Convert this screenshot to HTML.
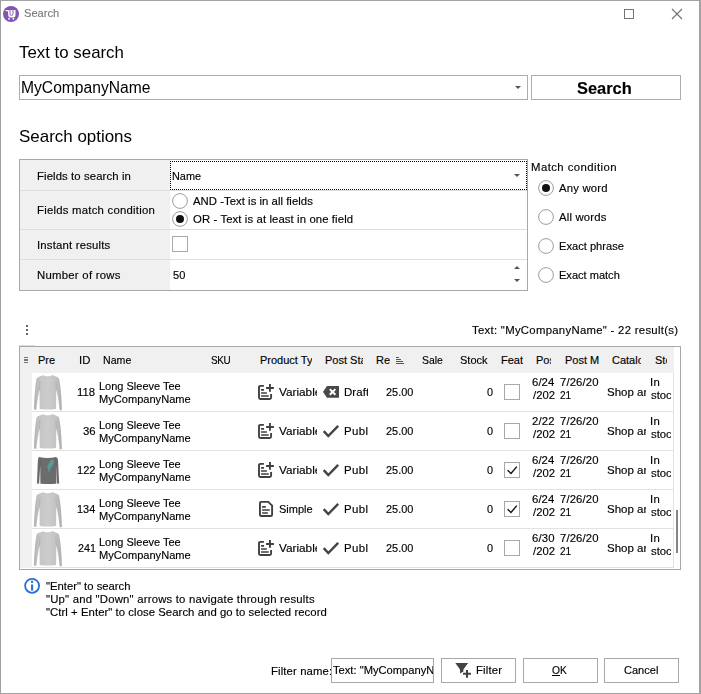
<!DOCTYPE html>
<html><head><meta charset="utf-8"><title>Search</title>
<style>
html,body{margin:0;padding:0;background:#fff;}
body{width:701px;height:694px;position:relative;overflow:hidden;font-family:"Liberation Sans", sans-serif;}
.t{position:absolute;white-space:nowrap;font-family:"Liberation Sans", sans-serif;-webkit-text-stroke:0.15px currentColor;}
.t span{display:inline-block;transform-origin:0 0;}
.b{position:absolute;box-sizing:border-box;}
svg{position:absolute;overflow:visible;}
</style></head><body>
<div class="b" style="left:0px;top:0px;width:701px;height:1px;background:#a3a3a3;"></div>
<div class="b" style="left:0px;top:0px;width:1px;height:694px;background:#a0a0a0;"></div>
<div class="b" style="left:699px;top:0px;width:2px;height:694px;background:#a3a3a3;"></div>
<div class="b" style="left:0px;top:693px;width:701px;height:1px;background:#a3a3a3;"></div>
<svg style="left:3px;top:6px" width="16" height="16" viewBox="0 0 16 16">
<circle cx="8" cy="8" r="8" fill="#7f54b3"/>
<path d="M2.600 3.900H5.200L5.700 5V4H12.500V9Q12.500 11.500 10 11.500H7.700Q5.400 11.500 5.200 9L4.900 5.200H2.600z" fill="#fff"/>
<path d="M7 4V8Q7 9.400 8.400 9.400Q10 9.400 10 8V4" fill="none" stroke="#7f54b3" stroke-width="0.900"/>
<circle cx="6" cy="12.800" r="0.950" fill="#fff"/><circle cx="10.400" cy="12.800" r="0.950" fill="#fff"/>
</svg>
<div class="t" style="left:24px;top:6px;font-size:11px;line-height:14px;font-weight:400;color:#7a7a7a;"><span style="transform:scaleX(1.0074);letter-spacing:0.000px">Search</span></div>
<svg style="left:624px;top:9px" width="10" height="10"><rect x="0.5" y="0.500" width="9" height="9" fill="none" stroke="#757575" stroke-width="1"/></svg>
<svg style="left:672px;top:9px" width="10" height="10"><path d="M0 0L10 10M10 0L0 10" stroke="#707070" stroke-width="1.1" fill="none"/></svg>
<div class="t" style="left:19px;top:42px;font-size:17px;line-height:21px;font-weight:400;color:#000;-webkit-text-stroke:0;"><span style="transform:scaleX(0.9914);letter-spacing:0.000px">Text to search</span></div>
<div class="b" style="left:19px;top:75px;width:509px;height:25px;border:1px solid #adadad;background:#fff;"></div>
<div class="t" style="left:21px;top:78px;font-size:16px;line-height:20px;font-weight:400;color:#000;-webkit-text-stroke:0;"><span style="transform:scaleX(0.9770);letter-spacing:0.000px">MyCompanyName</span></div>
<svg style="left:515px;top:86px" width="6" height="3"><path d="M0 0h6L3 3z" fill="#555"/></svg>
<div class="b" style="left:531px;top:75px;width:150px;height:25px;border:1px solid #adadad;background:#fff;"></div>
<div class="t" style="left:577px;top:79px;font-size:16px;line-height:20px;font-weight:700;color:#000;"><span style="transform:scaleX(1.0250);letter-spacing:0.000px">Search</span></div>
<div class="t" style="left:19px;top:126px;font-size:17px;line-height:21px;font-weight:400;color:#000;-webkit-text-stroke:0;"><span style="transform:scaleX(0.9964);letter-spacing:0.000px">Search options</span></div>
<div class="b" style="left:19px;top:159px;width:509px;height:132px;border:1px solid #a8a8a8;background:#fff;"></div>
<div class="b" style="left:20px;top:160px;width:150px;height:130px;background:#f0f0f0;"></div>
<div class="b" style="left:20px;top:190px;width:507px;height:1px;background:#dedede;"></div>
<div class="b" style="left:20px;top:229px;width:507px;height:1px;background:#dedede;"></div>
<div class="b" style="left:20px;top:259px;width:507px;height:1px;background:#dedede;"></div>
<div class="t" style="left:37px;top:169px;font-size:11px;line-height:14px;font-weight:400;color:#000;"><span style="transform:scaleX(1.0300);letter-spacing:0.101px">Fields to search in</span></div>
<div class="t" style="left:37px;top:203px;font-size:11px;line-height:14px;font-weight:400;color:#000;"><span style="transform:scaleX(1.0300);letter-spacing:0.232px">Fields match condition</span></div>
<div class="t" style="left:37px;top:238px;font-size:11px;line-height:14px;font-weight:400;color:#000;"><span style="transform:scaleX(1.0300);letter-spacing:0.189px">Instant results</span></div>
<div class="t" style="left:37px;top:268px;font-size:11px;line-height:14px;font-weight:400;color:#000;"><span style="transform:scaleX(1.0300);letter-spacing:0.259px">Number of rows</span></div>
<div class="b" style="left:170px;top:161px;width:357px;height:29px;border:1px dotted #000;"></div>
<div class="t" style="left:172px;top:169px;font-size:11px;line-height:14px;font-weight:400;color:#000;"><span style="transform:scaleX(0.9893);letter-spacing:0.000px">Name</span></div>
<svg style="left:514px;top:174px" width="6" height="3"><path d="M0 0h6L3 3z" fill="#555"/></svg>
<svg style="left:172px;top:193px" width="16" height="16"><circle cx="8" cy="8" r="7.400" fill="#fff" stroke="#9c9c9c" stroke-width="1"/></svg>
<svg style="left:172px;top:211.3px" width="16" height="16"><circle cx="8" cy="8" r="7.400" fill="#fff" stroke="#9c9c9c" stroke-width="1"/><circle cx="8" cy="8" r="4" fill="#111"/></svg>
<div class="b" style="left:170px;top:229px;width:30px;height:1px;background:#dedede;"></div>
<div class="t" style="left:193px;top:194px;font-size:11px;line-height:14px;font-weight:400;color:#000;"><span style="transform:scaleX(1.0300);letter-spacing:0.031px">AND -Text is in all fields</span></div>
<div class="t" style="left:193px;top:212px;font-size:11px;line-height:14px;font-weight:400;color:#000;"><span style="transform:scaleX(1.0300);letter-spacing:0.102px">OR - Text is at least in one field</span></div>
<div class="b" style="left:172px;top:236px;width:16px;height:16px;border:1px solid #a8a8a8;background:#fff;"></div>
<div class="t" style="left:173px;top:268px;font-size:11px;line-height:14px;font-weight:400;color:#000;"><span style="transform:scaleX(1.0044);letter-spacing:0.000px">50</span></div>
<svg style="left:514px;top:266px" width="6" height="3"><path d="M0 3h6L3 0z" fill="#555"/></svg>
<svg style="left:514px;top:279px" width="6" height="3"><path d="M0 0h6L3 3z" fill="#555"/></svg>
<div class="t" style="left:531px;top:160px;font-size:11px;line-height:14px;font-weight:400;color:#000;"><span style="transform:scaleX(1.0300);letter-spacing:0.432px">Match condition</span></div>
<svg style="left:538px;top:180px" width="16" height="16"><circle cx="8" cy="8" r="7.400" fill="#fff" stroke="#9c9c9c" stroke-width="1"/><circle cx="8" cy="8" r="4" fill="#111"/></svg>
<svg style="left:538px;top:209px" width="16" height="16"><circle cx="8" cy="8" r="7.400" fill="#fff" stroke="#9c9c9c" stroke-width="1"/></svg>
<svg style="left:538px;top:238px" width="16" height="16"><circle cx="8" cy="8" r="7.400" fill="#fff" stroke="#9c9c9c" stroke-width="1"/></svg>
<svg style="left:538px;top:267px" width="16" height="16"><circle cx="8" cy="8" r="7.400" fill="#fff" stroke="#9c9c9c" stroke-width="1"/></svg>
<div class="t" style="left:559px;top:181px;font-size:11px;line-height:14px;font-weight:400;color:#000;"><span style="transform:scaleX(1.0300);letter-spacing:0.193px">Any word</span></div>
<div class="t" style="left:559px;top:210px;font-size:11px;line-height:14px;font-weight:400;color:#000;"><span style="transform:scaleX(1.0300);letter-spacing:0.173px">All words</span></div>
<div class="t" style="left:559px;top:239px;font-size:11px;line-height:14px;font-weight:400;color:#000;"><span style="transform:scaleX(1.0120);letter-spacing:0.000px">Exact phrase</span></div>
<div class="t" style="left:559px;top:268px;font-size:11px;line-height:14px;font-weight:400;color:#000;"><span style="transform:scaleX(1.0043);letter-spacing:0.000px">Exact match</span></div>
<div class="b" style="left:26px;top:325px;width:2px;height:2px;background:#666;"></div>
<div class="b" style="left:26px;top:329px;width:2px;height:2px;background:#666;"></div>
<div class="b" style="left:26px;top:333px;width:2px;height:2px;background:#666;"></div>
<div class="t" style="left:472px;top:323px;font-size:11px;line-height:14px;font-weight:400;color:#000;"><span style="transform:scaleX(1.0300);letter-spacing:0.287px">Text: &quot;MyCompanyName&quot; - 22 result(s)</span></div>
<div class="b" style="left:19px;top:346px;width:662px;height:224px;border:1px solid #a8a8a8;background:#fff;"></div>
<div class="b" style="left:20px;top:347px;width:654px;height:26px;background:#f0f0f0;"></div>
<div class="b" style="left:20px;top:373px;width:12px;height:195px;background:#f0f0f0;"></div>
<div class="b" style="left:673px;top:373px;width:1px;height:195px;background:#e4e4e4;"></div>
<div class="b" style="left:19px;top:345px;width:16px;height:1px;background:#dcdcdc;"></div>
<div class="b" style="left:24px;top:357.0px;width:4px;height:0.8px;background:#777;"></div>
<div class="b" style="left:24px;top:358.5px;width:4px;height:0.8px;background:#777;"></div>
<div class="b" style="left:24px;top:360.0px;width:4px;height:0.8px;background:#777;"></div>
<div class="b" style="left:24px;top:361.5px;width:4px;height:0.8px;background:#777;"></div>
<div class="t" style="left:38px;top:353px;font-size:11px;line-height:14px;font-weight:400;color:#000;width:16.60px;overflow:hidden;"><span style="transform:scaleX(1.0000);letter-spacing:0.000px">Preview</span></div>
<div class="t" style="left:79px;top:353px;font-size:11px;line-height:14px;font-weight:400;color:#000;"><span style="transform:scaleX(1.0300);letter-spacing:0.015px">ID</span></div>
<div class="t" style="left:103px;top:353px;font-size:11px;line-height:14px;font-weight:400;color:#000;"><span style="transform:scaleX(0.9643);letter-spacing:0.000px">Name</span></div>
<div class="t" style="left:211px;top:353px;font-size:11px;line-height:14px;font-weight:400;color:#000;"><span style="transform:scaleX(0.9000);letter-spacing:-0.458px">SKU</span></div>
<div class="t" style="left:260px;top:353px;font-size:11px;line-height:14px;font-weight:400;color:#000;width:52.30px;overflow:hidden;"><span style="transform:scaleX(1.0000);letter-spacing:0.000px">Product Type</span></div>
<div class="t" style="left:325px;top:353px;font-size:11px;line-height:14px;font-weight:400;color:#000;width:38.40px;overflow:hidden;"><span style="transform:scaleX(1.0000);letter-spacing:0.000px">Post Status</span></div>
<div class="t" style="left:376px;top:353px;font-size:11px;line-height:14px;font-weight:400;color:#000;width:13.50px;overflow:hidden;"><span style="transform:scaleX(1.0000);letter-spacing:0.000px">Regular</span></div>
<div class="b" style="left:396px;top:357px;width:3px;height:1px;background:#555;"></div>
<div class="b" style="left:396px;top:359px;width:5px;height:1px;background:#555;"></div>
<div class="b" style="left:396px;top:361px;width:7px;height:1px;background:#555;"></div>
<div class="b" style="left:396px;top:363px;width:8px;height:1px;background:#555;"></div>
<div class="t" style="left:422px;top:353px;font-size:11px;line-height:14px;font-weight:400;color:#000;"><span style="transform:scaleX(0.9476);letter-spacing:0.000px">Sale</span></div>
<div class="t" style="left:460px;top:353px;font-size:11px;line-height:14px;font-weight:400;color:#000;"><span style="transform:scaleX(1.0037);letter-spacing:0.000px">Stock</span></div>
<div class="t" style="left:501px;top:353px;font-size:11px;line-height:14px;font-weight:400;color:#000;width:22.00px;overflow:hidden;"><span style="transform:scaleX(1.0000);letter-spacing:0.000px">Featured</span></div>
<div class="t" style="left:536px;top:353px;font-size:11px;line-height:14px;font-weight:400;color:#000;width:15.00px;overflow:hidden;"><span style="transform:scaleX(1.0000);letter-spacing:0.000px">Post Date</span></div>
<div class="t" style="left:565px;top:353px;font-size:11px;line-height:14px;font-weight:400;color:#000;width:33.50px;overflow:hidden;"><span style="transform:scaleX(1.0000);letter-spacing:0.000px">Post Modified</span></div>
<div class="t" style="left:612px;top:353px;font-size:11px;line-height:14px;font-weight:400;color:#000;width:29.30px;overflow:hidden;"><span style="transform:scaleX(1.0000);letter-spacing:0.000px">Catalog</span></div>
<div class="t" style="left:655px;top:353px;font-size:11px;line-height:14px;font-weight:400;color:#000;width:12.30px;overflow:hidden;"><span style="transform:scaleX(1.0000);letter-spacing:0.000px">Stock status</span></div>
<div class="b" style="left:32px;top:411px;width:641px;height:1px;background:#e2e2e2;"></div>
<svg style="left:32px;top:373px" width="32" height="38" viewBox="0 0 32 38">
<defs><linearGradient id="g0" x1="0" x2="1"><stop offset="0" stop-color="#b2b2b2"/><stop offset="0.220" stop-color="#c6c6c6"/><stop offset="0.500" stop-color="#cccccc"/><stop offset="0.780" stop-color="#c4c4c4"/><stop offset="1" stop-color="#aeaeae"/></linearGradient>
<filter id="s0" x="-10%" y="-10%" width="120%" height="120%"><feGaussianBlur stdDeviation="0.350"/></filter></defs>
<g filter="url(#s0)">
<path d="M11 2.400C8 3 5.500 4 4.600 5.600C3.300 12 2.400 24 1.900 36.400L4.300 37C5 30 6.200 22 7.500 17L7.700 36C13 36.700 19 36.700 24.100 36L24.300 17C25.800 22 27 30 27.700 37.400L29.900 37C29.600 24 28.500 12 27 5.600C26 4 23.500 3 20.600 2.200C18.500 4.200 13.500 4.500 11 2.400z" fill="url(#g0)"/>
<path d="M7.500 17L8 8M24.300 17L23.900 8" stroke="#adadad" stroke-width="0.800" fill="none"/>
<path d="M11 2.400C13.500 4.500 18.500 4.200 20.600 2.200" stroke="#b8b8b8" stroke-width="0.700" fill="none"/>
</g></svg>
<div class="t" style="left:77px;top:385px;font-size:11px;line-height:14px;font-weight:400;color:#000;"><span style="transform:scaleX(1.0300);letter-spacing:0.051px">118</span></div>
<div class="t" style="left:99px;top:379px;font-size:11px;line-height:14px;font-weight:400;color:#000;"><span style="transform:scaleX(0.9994);letter-spacing:0.000px">Long Sleeve Tee</span></div>
<div class="t" style="left:99px;top:392px;font-size:11px;line-height:14px;font-weight:400;color:#000;"><span style="transform:scaleX(1.0067);letter-spacing:0.000px">MyCompanyName</span></div>
<svg style="left:258px;top:384px" width="16" height="16" viewBox="0 0 16 16" fill="none" stroke="#404040" stroke-width="1.900">
<path d="M5.900 1.900H2.400Q1 1.900 1 3.300V13.600Q1 15.050 2.400 15.050H11.700Q13.100 15.050 13.100 13.600V10.100"/>
<path d="M11.950 0.100V7.650M8.100 4H15.900"/>
<path d="M3.050 5.850H6.050M3.050 9H8.850M3.050 12H10.750" stroke-width="1.700"/>
</svg>
<div class="t" style="left:279px;top:385px;font-size:11px;line-height:14px;font-weight:400;color:#000;width:37.60px;overflow:hidden;"><span style="transform:scaleX(1.0700);letter-spacing:0.000px">Variable</span></div>
<svg style="left:323px;top:386px" width="16" height="12" viewBox="0 0 16 12">
<path d="M4.300 0H15.500Q16 0 16 0.500V11.250Q16 11.750 15.500 11.750H4.300Q4 11.750 3.800 11.500L0.100 6.100Q0 5.900 0.100 5.700L3.800 0.250Q4 0 4.300 0z" fill="#484848"/>
<path d="M6.800 3.100L12.350 8.700M12.350 3.100L6.800 8.700" stroke="#fff" stroke-width="2"/>
</svg>
<div class="t" style="left:344px;top:385px;font-size:11px;line-height:14px;font-weight:400;color:#000;width:24.00px;overflow:hidden;"><span style="transform:scaleX(1.0400);letter-spacing:0.100px">Draft</span></div>
<div class="t" style="left:386px;top:385px;font-size:11px;line-height:14px;font-weight:400;color:#000;"><span style="transform:scaleX(0.9944);letter-spacing:0.000px">25.00</span></div>
<div class="t" style="left:487px;top:385px;font-size:11px;line-height:14px;font-weight:400;color:#000;"><span style="transform:scaleX(0.9905);letter-spacing:0.000px">0</span></div>
<div class="b" style="left:504px;top:384px;width:16px;height:16px;border:1px solid #a8a8a8;background:#fff;"></div>
<div class="t" style="left:532px;top:375px;font-size:11px;line-height:14px;font-weight:400;color:#000;"><span style="transform:scaleX(1.0300);letter-spacing:0.074px">6/24</span></div>
<div class="t" style="left:533px;top:388px;font-size:11px;line-height:14px;font-weight:400;color:#000;"><span style="transform:scaleX(1.0286);letter-spacing:0.000px">/202</span></div>
<div class="t" style="left:560px;top:375px;font-size:11px;line-height:14px;font-weight:400;color:#000;"><span style="transform:scaleX(1.0300);letter-spacing:0.110px">7/26/20</span></div>
<div class="t" style="left:560px;top:388px;font-size:11px;line-height:14px;font-weight:400;color:#000;"><span style="transform:scaleX(0.9156);letter-spacing:0.000px">21</span></div>
<div class="t" style="left:607px;top:385px;font-size:11px;line-height:14px;font-weight:400;color:#000;width:39.00px;overflow:hidden;"><span style="transform:scaleX(1.0450);letter-spacing:0.000px">Shop and</span></div>
<div class="t" style="left:650px;top:375px;font-size:11px;line-height:14px;font-weight:400;color:#000;"><span style="transform:scaleX(1.0300);letter-spacing:0.461px">In</span></div>
<div class="t" style="left:651px;top:388px;font-size:11px;line-height:14px;font-weight:400;color:#000;width:20.20px;overflow:hidden;"><span style="transform:scaleX(1.0300);letter-spacing:0.000px">stock</span></div>
<div class="b" style="left:32px;top:450px;width:641px;height:1px;background:#e2e2e2;"></div>
<svg style="left:32px;top:412px" width="32" height="38" viewBox="0 0 32 38">
<defs><linearGradient id="g1" x1="0" x2="1"><stop offset="0" stop-color="#b2b2b2"/><stop offset="0.220" stop-color="#c6c6c6"/><stop offset="0.500" stop-color="#cccccc"/><stop offset="0.780" stop-color="#c4c4c4"/><stop offset="1" stop-color="#aeaeae"/></linearGradient>
<filter id="s1" x="-10%" y="-10%" width="120%" height="120%"><feGaussianBlur stdDeviation="0.350"/></filter></defs>
<g filter="url(#s1)">
<path d="M11 2.400C8 3 5.500 4 4.600 5.600C3.300 12 2.400 24 1.900 36.400L4.300 37C5 30 6.200 22 7.500 17L7.700 36C13 36.700 19 36.700 24.100 36L24.300 17C25.800 22 27 30 27.700 37.400L29.900 37C29.600 24 28.500 12 27 5.600C26 4 23.500 3 20.600 2.200C18.500 4.200 13.500 4.500 11 2.400z" fill="url(#g1)"/>
<path d="M7.500 17L8 8M24.300 17L23.900 8" stroke="#adadad" stroke-width="0.800" fill="none"/>
<path d="M11 2.400C13.500 4.500 18.500 4.200 20.600 2.200" stroke="#b8b8b8" stroke-width="0.700" fill="none"/>
</g></svg>
<div class="t" style="left:83px;top:424px;font-size:11px;line-height:14px;font-weight:400;color:#000;"><span style="transform:scaleX(1.0300);letter-spacing:0.012px">36</span></div>
<div class="t" style="left:99px;top:418px;font-size:11px;line-height:14px;font-weight:400;color:#000;"><span style="transform:scaleX(0.9994);letter-spacing:0.000px">Long Sleeve Tee</span></div>
<div class="t" style="left:99px;top:431px;font-size:11px;line-height:14px;font-weight:400;color:#000;"><span style="transform:scaleX(1.0067);letter-spacing:0.000px">MyCompanyName</span></div>
<svg style="left:258px;top:423px" width="16" height="16" viewBox="0 0 16 16" fill="none" stroke="#404040" stroke-width="1.900">
<path d="M5.900 1.900H2.400Q1 1.900 1 3.300V13.600Q1 15.050 2.400 15.050H11.700Q13.100 15.050 13.100 13.600V10.100"/>
<path d="M11.950 0.100V7.650M8.100 4H15.900"/>
<path d="M3.050 5.850H6.050M3.050 9H8.850M3.050 12H10.750" stroke-width="1.700"/>
</svg>
<div class="t" style="left:279px;top:424px;font-size:11px;line-height:14px;font-weight:400;color:#000;width:37.60px;overflow:hidden;"><span style="transform:scaleX(1.0700);letter-spacing:0.000px">Variable</span></div>
<svg style="left:323px;top:425px" width="16" height="13" viewBox="0 0 16 13">
<path d="M0.700 6.100L5.300 11.100L15.200 0.800" stroke="#444" stroke-width="2.400" fill="none"/>
</svg>
<div class="t" style="left:344px;top:424px;font-size:11px;line-height:14px;font-weight:400;color:#000;width:24.00px;overflow:hidden;"><span style="transform:scaleX(1.0400);letter-spacing:0.350px">Publish</span></div>
<div class="t" style="left:386px;top:424px;font-size:11px;line-height:14px;font-weight:400;color:#000;"><span style="transform:scaleX(0.9944);letter-spacing:0.000px">25.00</span></div>
<div class="t" style="left:487px;top:424px;font-size:11px;line-height:14px;font-weight:400;color:#000;"><span style="transform:scaleX(0.9905);letter-spacing:0.000px">0</span></div>
<div class="b" style="left:504px;top:423px;width:16px;height:16px;border:1px solid #a8a8a8;background:#fff;"></div>
<div class="t" style="left:532px;top:414px;font-size:11px;line-height:14px;font-weight:400;color:#000;"><span style="transform:scaleX(1.0300);letter-spacing:0.157px">2/22</span></div>
<div class="t" style="left:533px;top:427px;font-size:11px;line-height:14px;font-weight:400;color:#000;"><span style="transform:scaleX(1.0286);letter-spacing:0.000px">/202</span></div>
<div class="t" style="left:560px;top:414px;font-size:11px;line-height:14px;font-weight:400;color:#000;"><span style="transform:scaleX(1.0300);letter-spacing:0.110px">7/26/20</span></div>
<div class="t" style="left:560px;top:427px;font-size:11px;line-height:14px;font-weight:400;color:#000;"><span style="transform:scaleX(0.9156);letter-spacing:0.000px">21</span></div>
<div class="t" style="left:607px;top:424px;font-size:11px;line-height:14px;font-weight:400;color:#000;width:39.00px;overflow:hidden;"><span style="transform:scaleX(1.0450);letter-spacing:0.000px">Shop and</span></div>
<div class="t" style="left:650px;top:414px;font-size:11px;line-height:14px;font-weight:400;color:#000;"><span style="transform:scaleX(1.0300);letter-spacing:0.461px">In</span></div>
<div class="t" style="left:651px;top:427px;font-size:11px;line-height:14px;font-weight:400;color:#000;width:20.20px;overflow:hidden;"><span style="transform:scaleX(1.0300);letter-spacing:0.000px">stock</span></div>
<div class="b" style="left:32px;top:489px;width:641px;height:1px;background:#e2e2e2;"></div>
<svg style="left:32px;top:451px" width="32" height="38" viewBox="0 0 32 38">
<defs><filter id="s2" x="-10%" y="-10%" width="120%" height="120%"><feGaussianBlur stdDeviation="0.350"/></filter></defs>
<g filter="url(#s2)">
<path d="M7 6Q15.500 8.200 24 6Q25.600 6.300 26 9L27.200 32.400L24.800 32.700L24.200 15L24.100 32.700Q16 33.400 8.400 32.700L8.200 15L7.100 32.700L4.900 32.400L5.900 9Q6.200 6.300 7 6z" fill="#6c6c6c"/>
<path d="M8.200 15L8.400 9M24.200 15L23.900 9" stroke="#5e5e5e" stroke-width="0.700" fill="none"/>
<path d="M19.200 8.600L22 9L21.600 13L18.600 17.400L17 22L16.200 18L15 15.600z" fill="#52a39c" opacity="0.850"/>
</g></svg>
<div class="t" style="left:77px;top:463px;font-size:11px;line-height:14px;font-weight:400;color:#000;"><span style="transform:scaleX(1.0059);letter-spacing:0.000px">122</span></div>
<div class="t" style="left:99px;top:457px;font-size:11px;line-height:14px;font-weight:400;color:#000;"><span style="transform:scaleX(0.9994);letter-spacing:0.000px">Long Sleeve Tee</span></div>
<div class="t" style="left:99px;top:470px;font-size:11px;line-height:14px;font-weight:400;color:#000;"><span style="transform:scaleX(1.0067);letter-spacing:0.000px">MyCompanyName</span></div>
<svg style="left:258px;top:462px" width="16" height="16" viewBox="0 0 16 16" fill="none" stroke="#404040" stroke-width="1.900">
<path d="M5.900 1.900H2.400Q1 1.900 1 3.300V13.600Q1 15.050 2.400 15.050H11.700Q13.100 15.050 13.100 13.600V10.100"/>
<path d="M11.950 0.100V7.650M8.100 4H15.900"/>
<path d="M3.050 5.850H6.050M3.050 9H8.850M3.050 12H10.750" stroke-width="1.700"/>
</svg>
<div class="t" style="left:279px;top:463px;font-size:11px;line-height:14px;font-weight:400;color:#000;width:37.60px;overflow:hidden;"><span style="transform:scaleX(1.0700);letter-spacing:0.000px">Variable</span></div>
<svg style="left:323px;top:464px" width="16" height="13" viewBox="0 0 16 13">
<path d="M0.700 6.100L5.300 11.100L15.200 0.800" stroke="#444" stroke-width="2.400" fill="none"/>
</svg>
<div class="t" style="left:344px;top:463px;font-size:11px;line-height:14px;font-weight:400;color:#000;width:24.00px;overflow:hidden;"><span style="transform:scaleX(1.0400);letter-spacing:0.350px">Publish</span></div>
<div class="t" style="left:386px;top:463px;font-size:11px;line-height:14px;font-weight:400;color:#000;"><span style="transform:scaleX(0.9944);letter-spacing:0.000px">25.00</span></div>
<div class="t" style="left:487px;top:463px;font-size:11px;line-height:14px;font-weight:400;color:#000;"><span style="transform:scaleX(0.9905);letter-spacing:0.000px">0</span></div>
<div class="b" style="left:504px;top:462px;width:16px;height:16px;border:1px solid #a8a8a8;background:#fff;"></div>
<svg style="left:504px;top:462px" width="16" height="16"><path d="M3.600 8.200L7 11.500L12.800 4.600" stroke="#111" stroke-width="1.400" fill="none"/></svg>
<div class="t" style="left:532px;top:453px;font-size:11px;line-height:14px;font-weight:400;color:#000;"><span style="transform:scaleX(1.0300);letter-spacing:0.074px">6/24</span></div>
<div class="t" style="left:533px;top:466px;font-size:11px;line-height:14px;font-weight:400;color:#000;"><span style="transform:scaleX(1.0286);letter-spacing:0.000px">/202</span></div>
<div class="t" style="left:560px;top:453px;font-size:11px;line-height:14px;font-weight:400;color:#000;"><span style="transform:scaleX(1.0300);letter-spacing:0.110px">7/26/20</span></div>
<div class="t" style="left:560px;top:466px;font-size:11px;line-height:14px;font-weight:400;color:#000;"><span style="transform:scaleX(0.9156);letter-spacing:0.000px">21</span></div>
<div class="t" style="left:607px;top:463px;font-size:11px;line-height:14px;font-weight:400;color:#000;width:39.00px;overflow:hidden;"><span style="transform:scaleX(1.0450);letter-spacing:0.000px">Shop and</span></div>
<div class="t" style="left:650px;top:453px;font-size:11px;line-height:14px;font-weight:400;color:#000;"><span style="transform:scaleX(1.0300);letter-spacing:0.461px">In</span></div>
<div class="t" style="left:651px;top:466px;font-size:11px;line-height:14px;font-weight:400;color:#000;width:20.20px;overflow:hidden;"><span style="transform:scaleX(1.0300);letter-spacing:0.000px">stock</span></div>
<div class="b" style="left:32px;top:528px;width:641px;height:1px;background:#e2e2e2;"></div>
<svg style="left:32px;top:490px" width="32" height="38" viewBox="0 0 32 38">
<defs><linearGradient id="g3" x1="0" x2="1"><stop offset="0" stop-color="#b2b2b2"/><stop offset="0.220" stop-color="#c6c6c6"/><stop offset="0.500" stop-color="#cccccc"/><stop offset="0.780" stop-color="#c4c4c4"/><stop offset="1" stop-color="#aeaeae"/></linearGradient>
<filter id="s3" x="-10%" y="-10%" width="120%" height="120%"><feGaussianBlur stdDeviation="0.350"/></filter></defs>
<g filter="url(#s3)">
<path d="M11 2.400C8 3 5.500 4 4.600 5.600C3.300 12 2.400 24 1.900 36.400L4.300 37C5 30 6.200 22 7.500 17L7.700 36C13 36.700 19 36.700 24.100 36L24.300 17C25.800 22 27 30 27.700 37.400L29.900 37C29.600 24 28.500 12 27 5.600C26 4 23.500 3 20.600 2.200C18.500 4.200 13.500 4.500 11 2.400z" fill="url(#g3)"/>
<path d="M7.500 17L8 8M24.300 17L23.900 8" stroke="#adadad" stroke-width="0.800" fill="none"/>
<path d="M11 2.400C13.500 4.500 18.500 4.200 20.600 2.200" stroke="#b8b8b8" stroke-width="0.700" fill="none"/>
</g></svg>
<div class="t" style="left:77px;top:502px;font-size:11px;line-height:14px;font-weight:400;color:#000;"><span style="transform:scaleX(0.9913);letter-spacing:0.000px">134</span></div>
<div class="t" style="left:99px;top:496px;font-size:11px;line-height:14px;font-weight:400;color:#000;"><span style="transform:scaleX(0.9994);letter-spacing:0.000px">Long Sleeve Tee</span></div>
<div class="t" style="left:99px;top:509px;font-size:11px;line-height:14px;font-weight:400;color:#000;"><span style="transform:scaleX(1.0067);letter-spacing:0.000px">MyCompanyName</span></div>
<svg style="left:259px;top:501px" width="15" height="16" viewBox="0 0 15 16" fill="none" stroke="#404040" stroke-width="1.900">
<path d="M2.350 0.900H9.300L13.100 4.600V13.650Q13.100 15.050 11.700 15.050H2.350Q0.950 15.050 0.950 13.650V2.300Q0.950 0.900 2.350 0.900z"/>
<path d="M3.100 5.950H6.800M3.100 9H10.800M3.100 12H8.900" stroke-width="1.700"/>
</svg>
<div class="t" style="left:279px;top:502px;font-size:11px;line-height:14px;font-weight:400;color:#000;"><span style="transform:scaleX(1.0015);letter-spacing:0.000px">Simple</span></div>
<svg style="left:323px;top:503px" width="16" height="13" viewBox="0 0 16 13">
<path d="M0.700 6.100L5.300 11.100L15.200 0.800" stroke="#444" stroke-width="2.400" fill="none"/>
</svg>
<div class="t" style="left:344px;top:502px;font-size:11px;line-height:14px;font-weight:400;color:#000;width:24.00px;overflow:hidden;"><span style="transform:scaleX(1.0400);letter-spacing:0.350px">Publish</span></div>
<div class="t" style="left:386px;top:502px;font-size:11px;line-height:14px;font-weight:400;color:#000;"><span style="transform:scaleX(0.9944);letter-spacing:0.000px">25.00</span></div>
<div class="t" style="left:487px;top:502px;font-size:11px;line-height:14px;font-weight:400;color:#000;"><span style="transform:scaleX(0.9905);letter-spacing:0.000px">0</span></div>
<div class="b" style="left:504px;top:501px;width:16px;height:16px;border:1px solid #a8a8a8;background:#fff;"></div>
<svg style="left:504px;top:501px" width="16" height="16"><path d="M3.600 8.200L7 11.500L12.800 4.600" stroke="#111" stroke-width="1.400" fill="none"/></svg>
<div class="t" style="left:532px;top:492px;font-size:11px;line-height:14px;font-weight:400;color:#000;"><span style="transform:scaleX(1.0300);letter-spacing:0.074px">6/24</span></div>
<div class="t" style="left:533px;top:505px;font-size:11px;line-height:14px;font-weight:400;color:#000;"><span style="transform:scaleX(1.0286);letter-spacing:0.000px">/202</span></div>
<div class="t" style="left:560px;top:492px;font-size:11px;line-height:14px;font-weight:400;color:#000;"><span style="transform:scaleX(1.0300);letter-spacing:0.110px">7/26/20</span></div>
<div class="t" style="left:560px;top:505px;font-size:11px;line-height:14px;font-weight:400;color:#000;"><span style="transform:scaleX(0.9156);letter-spacing:0.000px">21</span></div>
<div class="t" style="left:607px;top:502px;font-size:11px;line-height:14px;font-weight:400;color:#000;width:39.00px;overflow:hidden;"><span style="transform:scaleX(1.0450);letter-spacing:0.000px">Shop and</span></div>
<div class="t" style="left:650px;top:492px;font-size:11px;line-height:14px;font-weight:400;color:#000;"><span style="transform:scaleX(1.0300);letter-spacing:0.461px">In</span></div>
<div class="t" style="left:651px;top:505px;font-size:11px;line-height:14px;font-weight:400;color:#000;width:20.20px;overflow:hidden;"><span style="transform:scaleX(1.0300);letter-spacing:0.000px">stock</span></div>
<div class="b" style="left:32px;top:567px;width:641px;height:1px;background:#e2e2e2;"></div>
<svg style="left:32px;top:529px" width="32" height="38" viewBox="0 0 32 38">
<defs><linearGradient id="g4" x1="0" x2="1"><stop offset="0" stop-color="#b2b2b2"/><stop offset="0.220" stop-color="#c6c6c6"/><stop offset="0.500" stop-color="#cccccc"/><stop offset="0.780" stop-color="#c4c4c4"/><stop offset="1" stop-color="#aeaeae"/></linearGradient>
<filter id="s4" x="-10%" y="-10%" width="120%" height="120%"><feGaussianBlur stdDeviation="0.350"/></filter></defs>
<g filter="url(#s4)">
<path d="M11 2.400C8 3 5.500 4 4.600 5.600C3.300 12 2.400 24 1.900 36.400L4.300 37C5 30 6.200 22 7.500 17L7.700 36C13 36.700 19 36.700 24.100 36L24.300 17C25.800 22 27 30 27.700 37.400L29.900 37C29.600 24 28.500 12 27 5.600C26 4 23.500 3 20.600 2.200C18.500 4.200 13.500 4.500 11 2.400z" fill="url(#g4)"/>
<path d="M7.500 17L8 8M24.300 17L23.900 8" stroke="#adadad" stroke-width="0.800" fill="none"/>
<path d="M11 2.400C13.500 4.500 18.500 4.200 20.600 2.200" stroke="#b8b8b8" stroke-width="0.700" fill="none"/>
</g></svg>
<div class="t" style="left:78px;top:541px;font-size:11px;line-height:14px;font-weight:400;color:#000;"><span style="transform:scaleX(0.9771);letter-spacing:0.000px">241</span></div>
<div class="t" style="left:99px;top:535px;font-size:11px;line-height:14px;font-weight:400;color:#000;"><span style="transform:scaleX(0.9994);letter-spacing:0.000px">Long Sleeve Tee</span></div>
<div class="t" style="left:99px;top:548px;font-size:11px;line-height:14px;font-weight:400;color:#000;"><span style="transform:scaleX(1.0067);letter-spacing:0.000px">MyCompanyName</span></div>
<svg style="left:258px;top:540px" width="16" height="16" viewBox="0 0 16 16" fill="none" stroke="#404040" stroke-width="1.900">
<path d="M5.900 1.900H2.400Q1 1.900 1 3.300V13.600Q1 15.050 2.400 15.050H11.700Q13.100 15.050 13.100 13.600V10.100"/>
<path d="M11.950 0.100V7.650M8.100 4H15.900"/>
<path d="M3.050 5.850H6.050M3.050 9H8.850M3.050 12H10.750" stroke-width="1.700"/>
</svg>
<div class="t" style="left:279px;top:541px;font-size:11px;line-height:14px;font-weight:400;color:#000;width:37.60px;overflow:hidden;"><span style="transform:scaleX(1.0700);letter-spacing:0.000px">Variable</span></div>
<svg style="left:323px;top:542px" width="16" height="13" viewBox="0 0 16 13">
<path d="M0.700 6.100L5.300 11.100L15.200 0.800" stroke="#444" stroke-width="2.400" fill="none"/>
</svg>
<div class="t" style="left:344px;top:541px;font-size:11px;line-height:14px;font-weight:400;color:#000;width:24.00px;overflow:hidden;"><span style="transform:scaleX(1.0400);letter-spacing:0.350px">Publish</span></div>
<div class="t" style="left:386px;top:541px;font-size:11px;line-height:14px;font-weight:400;color:#000;"><span style="transform:scaleX(0.9944);letter-spacing:0.000px">25.00</span></div>
<div class="t" style="left:487px;top:541px;font-size:11px;line-height:14px;font-weight:400;color:#000;"><span style="transform:scaleX(0.9905);letter-spacing:0.000px">0</span></div>
<div class="b" style="left:504px;top:540px;width:16px;height:16px;border:1px solid #a8a8a8;background:#fff;"></div>
<div class="t" style="left:532px;top:531px;font-size:11px;line-height:14px;font-weight:400;color:#000;"><span style="transform:scaleX(1.0300);letter-spacing:0.157px">6/30</span></div>
<div class="t" style="left:533px;top:544px;font-size:11px;line-height:14px;font-weight:400;color:#000;"><span style="transform:scaleX(1.0286);letter-spacing:0.000px">/202</span></div>
<div class="t" style="left:560px;top:531px;font-size:11px;line-height:14px;font-weight:400;color:#000;"><span style="transform:scaleX(1.0300);letter-spacing:0.110px">7/26/20</span></div>
<div class="t" style="left:560px;top:544px;font-size:11px;line-height:14px;font-weight:400;color:#000;"><span style="transform:scaleX(0.9156);letter-spacing:0.000px">21</span></div>
<div class="t" style="left:607px;top:541px;font-size:11px;line-height:14px;font-weight:400;color:#000;width:39.00px;overflow:hidden;"><span style="transform:scaleX(1.0450);letter-spacing:0.000px">Shop and</span></div>
<div class="t" style="left:650px;top:531px;font-size:11px;line-height:14px;font-weight:400;color:#000;"><span style="transform:scaleX(1.0300);letter-spacing:0.461px">In</span></div>
<div class="t" style="left:651px;top:544px;font-size:11px;line-height:14px;font-weight:400;color:#000;width:20.20px;overflow:hidden;"><span style="transform:scaleX(1.0300);letter-spacing:0.000px">stock</span></div>
<div class="b" style="left:676px;top:510px;width:2px;height:43px;background:#858585;"></div>
<svg style="left:24px;top:578px" width="17" height="17" viewBox="0 0 17 17">
<circle cx="8.100" cy="7.800" r="7" fill="#fff" stroke="#2a6fd4" stroke-width="1.800"/>
<rect x="7.050" y="6.500" width="2.100" height="6.100" fill="#2a6fd4"/><rect x="7.050" y="2.800" width="2.100" height="2.100" fill="#2a6fd4"/>
</svg>
<div class="t" style="left:46px;top:579px;font-size:11px;line-height:14px;font-weight:400;color:#000;"><span style="transform:scaleX(1.0252);letter-spacing:0.000px">&quot;Enter&quot; to search</span></div>
<div class="t" style="left:46px;top:592px;font-size:11px;line-height:14px;font-weight:400;color:#000;"><span style="transform:scaleX(1.0300);letter-spacing:0.199px">&quot;Up&quot; and &quot;Down&quot; arrows to navigate through results</span></div>
<div class="t" style="left:46px;top:605px;font-size:11px;line-height:14px;font-weight:400;color:#000;"><span style="transform:scaleX(1.0300);letter-spacing:0.051px">&quot;Ctrl + Enter&quot; to close Search and go to selected record</span></div>
<div class="t" style="left:271px;top:664px;font-size:11px;line-height:14px;font-weight:400;color:#000;"><span style="transform:scaleX(1.0300);letter-spacing:0.117px">Filter name:</span></div>
<div class="b" style="left:331px;top:658px;width:103px;height:25px;border:1px solid #a8a8a8;background:#fff;"></div>
<div class="t" style="left:333px;top:663px;font-size:11px;line-height:14px;font-weight:400;color:#000;width:99.80px;overflow:hidden;"><span style="transform:scaleX(1.0150);letter-spacing:0.000px">Text: &quot;MyCompanyName</span></div>
<div class="b" style="left:441px;top:658px;width:75px;height:25px;border:1px solid #a8a8a8;background:#fff;"></div>
<div class="b" style="left:523px;top:658px;width:75px;height:25px;border:1px solid #a8a8a8;background:#fff;"></div>
<div class="b" style="left:604px;top:658px;width:75px;height:25px;border:1px solid #a8a8a8;background:#fff;"></div>
<svg style="left:455px;top:662px" width="17" height="17" viewBox="0 0 17 17">
<path d="M0.300 1.100H13.100L8.400 7.400V9.600L5 11.500V7.400z" fill="#444"/>
<path d="M12 8V15.700M8 11.750H16" stroke="#444" stroke-width="2.100" fill="none"/>
</svg>
<div class="t" style="left:476px;top:663px;font-size:11px;line-height:14px;font-weight:400;color:#000;"><span style="transform:scaleX(1.0300);letter-spacing:0.185px">Filter</span></div>
<div class="t" style="left:552px;top:663px;font-size:11px;line-height:14px;font-weight:400;color:#000;"><span style="transform:scaleX(0.9311);letter-spacing:0.000px"><u>O</u>K</span></div>
<div class="t" style="left:624px;top:663px;font-size:11px;line-height:14px;font-weight:400;color:#000;"><span style="transform:scaleX(1.0030);letter-spacing:0.000px">Cancel</span></div>
</body></html>
